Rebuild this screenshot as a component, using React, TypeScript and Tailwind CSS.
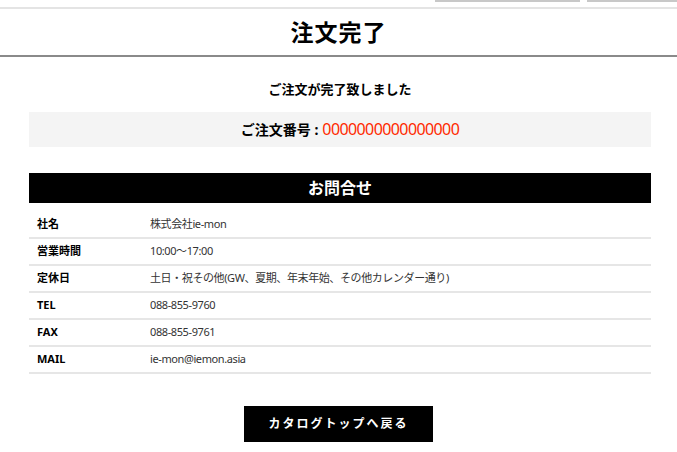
const ROWS = [
  { label: "社名", value: "株式会社ie-mon" },
  { label: "営業時間", value: "10:00～17:00" },
  { label: "定休日", value: "土日・祝その他(GW、夏期、年末年始、その他カレンダー通り)" },
  { label: "TEL", value: "088-855-9760" },
  { label: "FAX", value: "088-855-9761" },
  { label: "MAIL", value: "ie-mon@iemon.asia" },
];

const FONT = {
  fontFamily: '"Noto Sans", "Noto Sans CJK JP", sans-serif',
};

export default function App() {
  return (
    <div className="min-h-[452px] w-[677px] bg-white text-black" style={FONT}>
      {/* cut-off header tabs */}
      <div className="flex h-[2px] justify-end gap-[7px]">
        <div className="w-[145px] bg-[#c8c8c8]" />
        <div className="w-[90px] bg-[#c8c8c8]" />
      </div>
      <div className="mt-[5px] h-[2px] bg-[#e4e4e4]" />

      <h1 className="flex h-[48px] items-center justify-center border-b-2 border-[#8a8a8a] text-[23px] font-bold tracking-[1px]">
        注文完了
      </h1>

      <div className="px-[29px] pr-[26px]">
        <p className="mt-[23px] text-center text-[13px] font-bold">
          ご注文が完了致しました
        </p>

        <div className="mt-[12px] flex h-[35px] items-center justify-center bg-[#f4f4f4] pl-[20px]">
          <span className="text-[14px] font-bold">ご注文番号 : </span>
          <span className="ml-[4px] text-[16px] tracking-[-0.6px] text-[#ff2a00]">0000000000000000</span>
        </div>

        <div className="mt-[26px] flex h-[30px] items-center justify-center bg-black text-[16px] font-bold text-white">
          お問合せ
        </div>

        <div className="mt-[9px]">
          {ROWS.map((row) => (
            <div
              key={row.label}
              className="flex h-[27px] items-center border-b-2 border-[#e6e6e6] text-[11px]"
            >
              <span className="w-[121px] pl-[8px] font-bold">{row.label}</span>
              <span className="text-[11px] tracking-[-0.4px] text-[#333]">{row.value}</span>
            </div>
          ))}
        </div>
      </div>

      <div className="mt-[32px] flex justify-center">
        <button className="h-[36px] w-[189px] bg-black text-[12px] font-bold tracking-[2px] text-white">
          カタログトップへ戻る
        </button>
      </div>
    </div>
  );
}
